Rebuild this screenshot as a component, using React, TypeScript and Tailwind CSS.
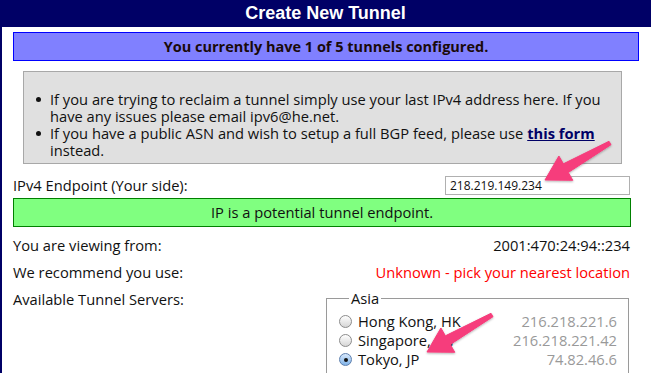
import React from "react";

function Radio({ checked }: { checked?: boolean }) {
  if (checked) {
    return (
      <div className="w-[13px] h-[13px] rounded-full border border-[#5d7fae] bg-gradient-to-b from-[#d7e8fb] to-[#80b3e8] flex items-center justify-center shrink-0">
        <div className="w-[4px] h-[4px] rounded-full bg-[#111]" />
      </div>
    );
  }
  return (
    <div className="w-[13px] h-[13px] rounded-full border border-[#8c8c8c] bg-gradient-to-b from-[#ffffff] to-[#d6d6d6] shrink-0" />
  );
}

function ServerRow({ name, ip, checked }: { name: string; ip: string; checked?: boolean }) {
  return (
    <div className="flex items-center h-[19px]">
      <Radio checked={checked} />
      <span className="ml-[6px] text-[#111]">{name}</span>
      <span className="ml-auto text-[#999]">{ip}</span>
    </div>
  );
}

export default function App() {
  return (
    <div className="relative w-[651px] h-[373px] overflow-hidden bg-white font-['Open_Sans','DejaVu_Sans',sans-serif] text-[14.7px] leading-[17px] text-[#111]">
      <div className="h-[27px] bg-[#000066] flex items-center justify-center text-white font-bold text-[18px] font-['Liberation_Sans',sans-serif]">
        Create New Tunnel
      </div>
      <div className="border-l-2 border-[#000066] min-h-[346px] flex flex-col">
        <div className="shrink-0 ml-[11px] mr-[12px] mt-[5px] h-[29px] border border-[#0000ff] bg-[#8080ff] flex items-center justify-center font-bold text-[14.5px] text-[#1a0a0a]">
          You currently have 1 of 5 tunnels configured.
        </div>
        <div className="shrink-0 mt-[10px] ml-[21px] w-[599px] h-[93px] border border-[#a8a8a8] bg-[#e0e0e0] pt-[19px]">
          <div className="flex">
            <div className="w-[12px]" />
            <div className="w-[14px] pt-[6px]">
              <div className="w-[5px] h-[5px] rounded-full bg-[#111]" />
            </div>
            <div className="whitespace-nowrap">
              If you are trying to reclaim a tunnel simply use your last IPv4 address here. If you
              <br />
              have any issues please email ipv6@he.net.
            </div>
          </div>
          <div className="flex">
            <div className="w-[12px]" />
            <div className="w-[14px] pt-[6px]">
              <div className="w-[5px] h-[5px] rounded-full bg-[#111]" />
            </div>
            <div className="whitespace-nowrap">
              If you have a public ASN and wish to setup a full BGP feed, please use{" "}
              <span className="font-bold underline text-[#000066]">this form</span>
              <br />
              instead.
            </div>
          </div>
        </div>
        <div className="shrink-0 mt-[12px] h-[19px] flex items-center justify-between ml-[11px] mr-[21px]">
          <span>IPv4 Endpoint (Your side):</span>
          <div className="w-[185px] h-[19px] border border-[#b0b0b0] bg-white flex items-center pl-[4px] text-[12px]">
            218.219.149.234
          </div>
        </div>
        <div className="shrink-0 mt-[3px] ml-[11px] mr-[20px] h-[29px] border border-[#008000] bg-[#80ff80] flex items-center justify-center">
          IP is a potential tunnel endpoint.
        </div>
        <div className="shrink-0 mt-[9px] h-[18px] flex items-center justify-between ml-[11px] mr-[21px]">
          <span>You are viewing from:</span>
          <span>2001:470:24:94::234</span>
        </div>
        <div className="shrink-0 mt-[9px] h-[18px] flex items-center justify-between ml-[11px] mr-[21px]">
          <span>We recommend you use:</span>
          <span className="text-[#ff0000]">Unknown - pick your nearest location</span>
        </div>
        <div className="shrink-0 mt-[8px] flex items-start ml-[11px] mr-[22px]">
          <span className="pt-[2px]">Available Tunnel Servers:</span>
          <fieldset className="ml-auto w-[303px] border border-[#9a9a9a] pl-[12px] pr-[11px] pt-[5px] pb-[6px]">
            <legend className="ml-[10px] px-[2px] leading-[18px]">Asia</legend>
            <ServerRow name="Hong Kong, HK" ip="216.218.221.6" />
            <ServerRow name="Singapore, SG" ip="216.218.221.42" />
            <ServerRow name="Tokyo, JP" ip="74.82.46.6" checked />
          </fieldset>
        </div>
      </div>
      <svg className="absolute inset-0 pointer-events-none" width="651" height="373" viewBox="0 0 651 373">
        <defs>
          <filter id="sh" x="-20%" y="-20%" width="140%" height="140%">
            <feDropShadow dx="0" dy="1" stdDeviation="1" floodColor="#000" floodOpacity="0.3" />
          </filter>
        </defs>
        <g filter="url(#sh)" fill="#f63d7b" stroke="#f63d7b" strokeWidth="1" strokeLinejoin="round">
          <polygon points="545,180 558.9,156 563.4,163.8 609,141.3 611,144.7 568.3,172.5 572.8,180.3" />
          <polygon points="427,352 440.9,328 445.4,335.8 491,313.3 493,316.7 450.3,344.5 454.8,352.3" />
        </g>
      </svg>
    </div>
  );
}
